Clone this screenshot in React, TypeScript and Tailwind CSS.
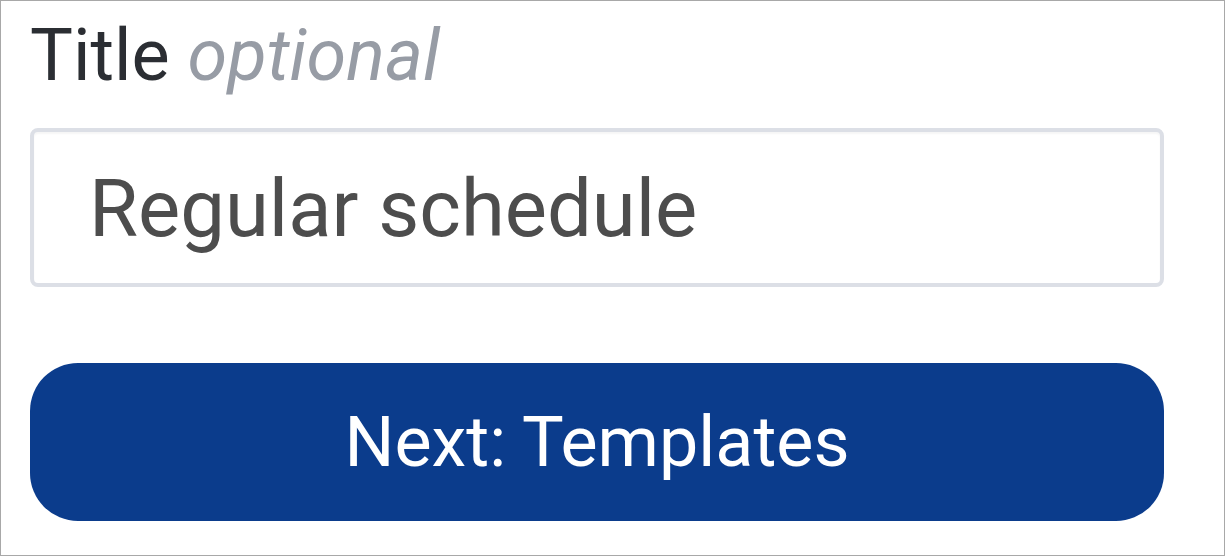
export default function App() {
  return (
    <div className="w-[1225px] h-[556px] border border-[#a8a8a8] bg-white font-['Roboto',sans-serif]">
      <div className="pl-[29px] w-[1163px] flex flex-col">
        <label className="pt-[19px] text-[72px] leading-none text-[#2b2e33] whitespace-nowrap">
          Title <span className="italic text-[#979ca5]">optional</span>
        </label>
        <div className="mt-[36px] h-[159px] border-4 border-[#dcdfe6] rounded-[8px] shadow-[inset_0_2px_2px_rgba(0,0,0,0.04)] flex items-center pl-[55px] pt-[2px]">
          <span className="text-[79.6px] text-[#4d4d4d] leading-none">Regular schedule</span>
        </div>
        <button className="mt-[76px] h-[158px] rounded-[48px] bg-[#0b3c8c] text-white text-[70px] leading-none flex items-center justify-center">
          Next: Templates
        </button>
      </div>
    </div>
  )
}
